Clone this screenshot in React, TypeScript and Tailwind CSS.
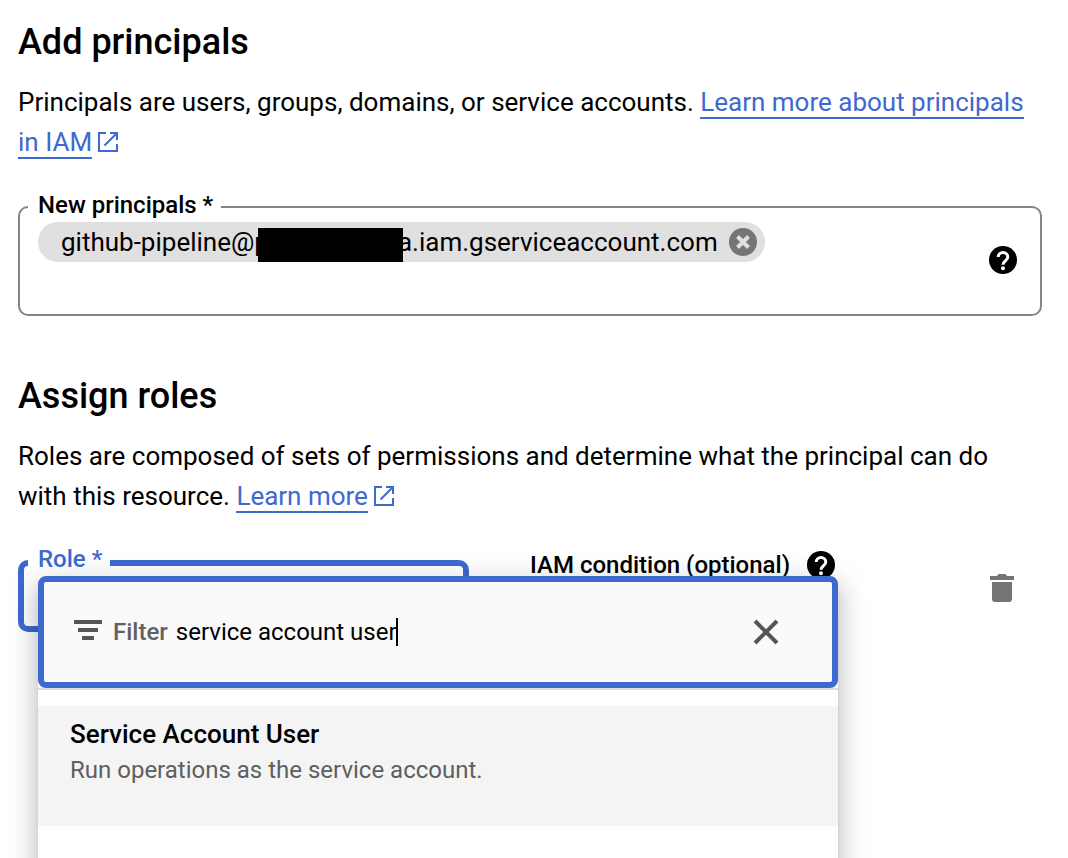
import React, { useState } from "react";

function OpenInNewIcon() {
  return (
    <svg aria-hidden="true" viewBox="0 0 20 20" className="ml-1.5 inline-block h-5 w-5 align-[-1px]" fill="none" stroke="currentColor" strokeWidth="2">
      <path d="M8 1H1v18h18v-7" />
      <path d="M12 1h7v7M18.500 1.500L6.500 13.500" />
    </svg>
  );
}

function HelpIcon() {
  return (
    <svg aria-hidden="true" viewBox="0 0 28 28" className="h-7 w-7" fill="none">
      <circle cx="14" cy="14" r="14" fill="#000" />
      <path d="M9.200 11a4.800 4.600 0 0 1 9.600 0c0 3.700-4.800 3.800-4.800 7.800" stroke="#fff" strokeWidth="3" />
      <circle cx="14" cy="22.300" r="2" fill="#fff" />
    </svg>
  );
}

function RemoveChipIcon() {
  return (
    <svg aria-hidden="true" viewBox="0 0 28 28" className="h-7 w-7">
      <circle cx="14" cy="14" r="14" fill="#757575" />
      <path d="M8.500 8.500l11 11M19.500 8.500l-11 11" stroke="#e0e0e0" strokeWidth="4" />
    </svg>
  );
}

function FilterIcon() {
  return (
    <svg aria-hidden="true" viewBox="0 0 28 20" className="mb-1 h-5 w-7 shrink-0" fill="#565656">
      <path d="M0 0h28v4H0zM4 8h20v4H4zM8 16h12v4H8z" />
    </svg>
  );
}

function CloseIcon() {
  return (
    <svg aria-hidden="true" viewBox="0 0 26 26" className="h-[26px] w-[26px]" fill="none" stroke="#565656" strokeWidth="4">
      <path d="M2 2l22 22M24 2L2 24" />
    </svg>
  );
}

function TrashIcon() {
  return (
    <svg aria-hidden="true" viewBox="0 0 24 28" className="h-7 w-6" fill="#757575">
      <path d="M0 2h7l1.500-2h7L17 2h7v4H0zM2 8h20v17a3 3 0 0 1-3 3H5a3 3 0 0 1-3-3z" />
    </svg>
  );
}

function DocLink({ children }: { children: React.ReactNode }) {
  return (
    <a href="#" className="text-[#3e69d0]">
      <span className="border-b-2 border-[#3e69d0]">{children}</span>
      <OpenInNewIcon />
    </a>
  );
}

function RolePicker() {
  const [query, setQuery] = useState("service account user");
  return (
    <div className="absolute top-[29px] left-5 z-10 min-h-[480px] w-[800px] bg-white shadow-[0_10px_10px_-6px_rgba(0,0,0,0.2),0_16px_20px_2px_rgba(0,0,0,0.14),0_6px_28px_4px_rgba(0,0,0,0.12)]">
      <div className="border-b-2 border-[#dcdcdc]">
        <div className="flex h-28 items-center rounded-lg border-6 border-[#3e69d0] bg-[#fafafa] pr-[53px] pl-[30px]">
          <FilterIcon />
          <label htmlFor="role-filter" className="ml-[11px] text-2xl font-medium text-[#616161]">
            Filter
          </label>
          <input
            id="role-filter"
            value={query}
            onChange={(e) => setQuery(e.target.value)}
            className="ml-2 text-2xl text-black caret-transparent outline-none [field-sizing:content]"
          />
          <span className="-ml-px h-7 w-0.5 bg-black" />
          <button type="button" aria-label="Clear filter" className="ml-auto">
            <CloseIcon />
          </button>
        </div>
      </div>
      <ul role="listbox" aria-label="Roles" className="pt-4">
        <li role="option" aria-selected="true" className="h-[120px] bg-[#f4f4f4] px-8 pt-2.5">
          <div className="text-[26px] leading-9 font-medium text-black">Service Account User</div>
          <div className="text-2xl leading-9 text-[#5f5f5f]">Run operations as the service account.</div>
        </li>
      </ul>
    </div>
  );
}

export default function App() {
  return (
    <main className="relative min-h-screen overflow-hidden bg-white pt-[22px] pr-[26px] pl-[18px] font-['Roboto',sans-serif] text-[26px] leading-10 text-black">
      <section>
        <h1 className="text-4xl leading-10 font-medium">Add principals</h1>
        <p className="mt-5">
          Principals are users, groups, domains, or service accounts. <DocLink>Learn more about principals in IAM</DocLink>
        </p>
        <fieldset className="mt-[31px] min-w-0 rounded-[10px] border-2 border-[#80868b] pt-px pb-[52px]">
          <legend className="ml-2 pr-2 pb-1 pl-2.5 text-2xl leading-6 font-medium">
            <label htmlFor="principals">New principals *</label>
          </legend>
          <div className="flex items-center pr-[23px] pl-[18px]">
            <div className="flex h-10 items-center rounded-full bg-[#e0e0e0] pr-2 pl-[23px]">
              <span>github-pipeline@p</span>
              <span className="relative -mr-[5px] -ml-[11px] h-[34px] w-[145px] self-end bg-black" />
              <span>a.iam.gserviceaccount.com</span>
              <button type="button" aria-label="Remove principal" className="ml-[11px]">
                <RemoveChipIcon />
              </button>
            </div>
            <input id="principals" className="min-w-0 flex-1 outline-none" />
            <button type="button" aria-label="Help for new principals" className="-mb-9">
              <HelpIcon />
            </button>
          </div>
        </fieldset>
      </section>

      <section className="mt-[60px]">
        <h2 className="text-4xl leading-10 font-medium">Assign roles</h2>
        <p className="mt-5">
          Roles are composed of sets of permissions and determine what the principal can do with this resource.{" "}
          <DocLink>Learn more</DocLink>
        </p>
        <div className="relative mt-[31px] flex items-start">
          <fieldset className="w-[451px] rounded-[10px] border-6 border-[#3e69d0]">
            <legend className="ml-1 pr-2 pb-2 pl-2.5 text-2xl leading-6 font-medium text-[#3e69d0]">
              <label htmlFor="role">Role *</label>
            </legend>
            <button id="role" type="button" aria-haspopup="listbox" aria-expanded="true" className="block h-[47px] w-full" />
          </fieldset>
          <div className="ml-[61px] flex items-center gap-[17px] pt-1">
            <span className="text-2xl leading-7 font-medium">IAM condition (optional)</span>
            <button type="button" aria-label="Help for IAM condition">
              <HelpIcon />
            </button>
          </div>
          <button type="button" aria-label="Delete role" className="mt-[27px] mr-7 ml-auto">
            <TrashIcon />
          </button>
          <RolePicker />
        </div>
      </section>
    </main>
  );
}
